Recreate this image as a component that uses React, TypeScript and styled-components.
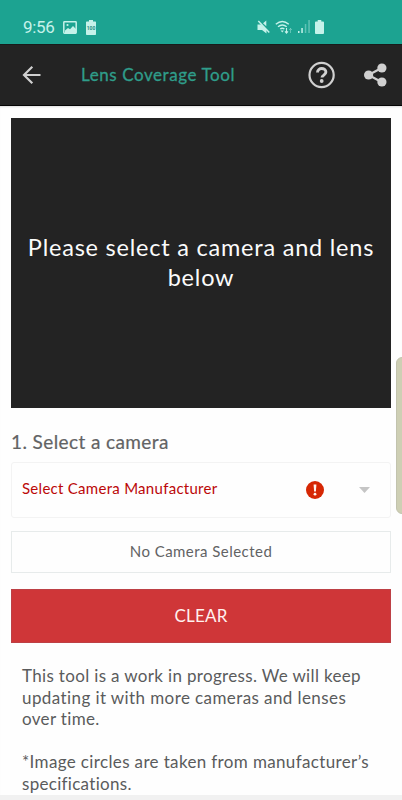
import React from "react";
import styled, { createGlobalStyle } from "styled-components";

const GlobalStyle = createGlobalStyle`
  * { box-sizing: border-box; }
  body { margin: 0; background: #fefefe; font-family: Lato, "Open Sans", sans-serif; }
  p, h1, h2 { margin: 0; font-weight: 400; }
  button { font-family: inherit; }
  svg { display: block; flex: none; }
`;

const Screen = styled.div`
  position: relative;
  width: 402px;
  height: 800px;
  overflow: hidden;
  display: flex;
  flex-direction: column;
  background: #fefefe;
`;

const StatusBar = styled.div`
  height: 44px;
  flex: none;
  display: flex;
  align-items: center;
  padding: 10px 78px 0 23px;
  background: #1ca391;
  color: #c5f2ea;
`;

const Clock = styled.span`
  width: 40px;
  font: 400 17px/20px Roboto, sans-serif;
  letter-spacing: -0.3px;
`;

const StatusGroup = styled.div<{ $end?: boolean }>`
  display: flex;
  align-items: center;
  gap: ${(p) => (p.$end ? 5 : 9)}px;
  margin-left: ${(p) => (p.$end ? "auto" : 0)};
  padding-bottom: ${(p) => (p.$end ? 1 : 0)}px;
`;

const AppBar = styled.header`
  height: 62px;
  flex: none;
  display: flex;
  align-items: center;
  padding: 0 15px 0 20px;
  background: #232323;
  border-top: 1px solid #171b1b;
  border-bottom: 1px solid #050505;
`;

const IconButton = styled.button<{ $gap?: number }>`
  display: flex;
  padding: 0;
  border: 0;
  background: none;
  color: #d0d0d0;
  margin-left: ${(p) => p.$gap ?? 0}px;
`;

const Title = styled.h1`
  flex: 1;
  margin-left: 37px;
  color: #2f9d8a;
  font-size: 17px;
  font-weight: 400;
  line-height: 22px;
  letter-spacing: 0.58px;
  white-space: nowrap;
  -webkit-text-stroke: 0.3px currentColor;
`;

const Content = styled.main`
  flex: 1;
  display: flex;
  flex-direction: column;
  padding: 12px 11px 0;
  box-shadow: inset 0 2px 2px -1px #ddd;
`;

const Preview = styled.section`
  height: 290px;
  flex: none;
  display: flex;
  align-items: center;
  justify-content: center;
  padding: 0 10px 3px;
  background: #232323;
  color: #fbfbfb;
  text-align: center;
  font-size: 23.5px;
  line-height: 30px;
  letter-spacing: 0.78px;
`;

const Heading = styled.h2`
  margin-top: 22px;
  height: 24px;
  color: #626364;
  font-size: 19px;
  line-height: 24px;
  letter-spacing: 0.4px;
  -webkit-text-stroke: 0.2px currentColor;
`;

const SelectBox = styled.div`
  height: 56px;
  flex: none;
  margin-top: 8px;
  display: flex;
  align-items: center;
  padding: 0 20px 0 10px;
  border: 1px solid #f3f3f3;
  border-radius: 3px;
  color: #bb0808;
`;

const SelectLabel = styled.span`
  width: 284px;
  padding-bottom: 4px;
  font-size: 15px;
  line-height: 20px;
  letter-spacing: 0.28px;
  white-space: nowrap;
`;

const Caret = styled.svg`
  margin-left: auto;
`;

const Selection = styled.div`
  height: 42px;
  flex: none;
  margin-top: 13px;
  border: 1px solid #e7ebeb;
  color: #626364;
  text-align: center;
  font-size: 15px;
  line-height: 39px;
  letter-spacing: 0.46px;
`;

const ClearButton = styled.button`
  height: 54px;
  flex: none;
  margin-top: 16px;
  padding: 0;
  border: 1px solid #bd4045;
  background: #cf3638;
  color: #fff1ef;
  font-size: 17px;
  line-height: 20px;
  letter-spacing: 0.2px;
`;

const Notes = styled.div`
  margin: 22px 11px 0;
  display: grid;
  gap: 21.5px;
  color: #5a5b5c;
  font-size: 17px;
  line-height: 21.6px;
  letter-spacing: 0.34px;
`;

const Line = styled.span<{ $track?: number }>`
  display: block;
  white-space: nowrap;
  letter-spacing: ${(p) => (p.$track === undefined ? "inherit" : `${p.$track}px`)};
`;

const BottomEdge = styled.div`
  height: 5px;
  flex: none;
  background: #f1f1f1;
`;

const EdgeHandle = styled.div`
  position: absolute;
  right: -6px;
  top: 357px;
  width: 12px;
  height: 157px;
  border-radius: 6px;
  background: #cecfb4;
  border: 1px solid #c2c3ae;
`;

export default function App() {
  return (
    <Screen>
      <GlobalStyle />
      <StatusBar>
        <Clock>9:56</Clock>
        <StatusGroup>
          <svg width="14" height="13" viewBox="0 0 14 13" fill="none" stroke="currentColor">
            <rect x="0.8" y="0.8" width="12.4" height="11.4" rx="0.6" strokeWidth="1.5" />
            <path d="M2 9.5 5 7l2 1.3L10 5l3 3v4H2z" fill="currentColor" stroke="none" />
            <circle cx="4.5" cy="4" r="1.1" fill="currentColor" stroke="none" />
          </svg>
          <svg width="10" height="15" viewBox="0 0 10 15">
            <path d="M3 0h4v1.5h2.3q.7 0 .7.7v12q0 .8-.8.8H.8q-.8 0-.8-.8v-12q0-.7.7-.7H3z" fill="currentColor" />
            <text x="5" y="10.2" textAnchor="middle" fontFamily="Roboto" fontSize="5" fontWeight="700" fill="#248d80">100</text>
          </svg>
        </StatusGroup>
        <StatusGroup $end>
          <svg width="13" height="14" viewBox="0 0 13 14" fill="currentColor">
            <path d="M.5 4.4H4l5.500 5.100v4L5 9.900H.5zM6 3.200 9.300.5v5.700z" />
            <path d="m1.300 1 11 11.500" stroke="currentColor" strokeWidth="1.5" />
          </svg>
          <svg width="18" height="14" viewBox="0 0 18 14" fill="none" stroke="currentColor" strokeWidth="1.4">
            <path d="M.8 4.2q6.5-5.4 13 0M3 6.7q4.3-3.5 8.7 0M5.2 9q2.1-1.6 4.2 0" />
            <path d="m5.6 10.4 1.7 2 1.5-2z" fill="currentColor" stroke="none" />
            <path d="M11.5 8v5M10 11.4l1.5 1.7 1.5-1.7" strokeWidth="1.1" />
            <path d="M15.5 13V8.5M14 10l1.5-1.6L17 10" strokeWidth="1" opacity=".4" />
          </svg>
          <svg width="12" height="13" viewBox="0 0 12 13" fill="currentColor">
            <path d="M0 11h1.5v2H0zM3.3 8h1.5v5H3.3z" />
            <path d="M6.8 4h1.5v9H6.8zM10.3 0h1.5v13h-1.5z" opacity=".4" />
          </svg>
          <svg width="9" height="14" viewBox="0 0 10 14" preserveAspectRatio="none" fill="currentColor">
            <path d="M3 0h4v1.5h2q1 0 1 1V13q0 1-1 1H1q-1 0-1-1V2.5q0-1 1-1h2z" />
          </svg>
        </StatusGroup>
      </StatusBar>
      <AppBar>
        <IconButton aria-label="Back">
          <svg width="24" height="22" viewBox="0 0 24 22" fill="none" stroke="currentColor" strokeWidth="2.2">
            <path d="M20.500 11H4M12.300 2.700 4 11l8.300 8.300" />
          </svg>
        </IconButton>
        <Title>Lens Coverage Tool</Title>
        <IconButton aria-label="Help">
          <svg width="28" height="28" viewBox="0 0 28 28" fill="none" stroke="currentColor">
            <circle cx="14.600" cy="14" r="12.1" strokeWidth="2.2" />
            <path d="M10.500 11.500c0-5.400 8.400-5 8.400-.4 0 3-3.900 2.900-3.900 5.500" strokeWidth="2.9" />
            <circle cx="14.700" cy="20" r="1.9" fill="currentColor" stroke="none" />
          </svg>
        </IconButton>
        <IconButton $gap={28} aria-label="Share">
          <svg width="24" height="24" viewBox="0 0 24 24" fill="currentColor">
            <path d="m18.500 5-13 7 13 7" fill="none" stroke="currentColor" strokeWidth="2.2" />
            <circle cx="18.900" cy="5" r="4.600" />
            <circle cx="5.600" cy="12" r="4.600" />
            <circle cx="18.900" cy="19" r="4.600" />
          </svg>
        </IconButton>
      </AppBar>
      <Content>
        <Preview>
          <p>
            <Line>Please select a camera and lens</Line>
            <Line>below</Line>
          </p>
        </Preview>
        <Heading>1. Select a camera</Heading>
        <SelectBox>
          <SelectLabel>Select Camera Manufacturer</SelectLabel>
          <svg width="18" height="18" viewBox="0 0 18 18">
            <circle cx="9" cy="9" r="9" fill="#d62704" />
            <path d="M7.600 3.500h2.800L9.900 10.500H8.100z" fill="#fff4ef" />
            <circle cx="9" cy="13.200" r="1.400" fill="#fff4ef" />
          </svg>
          <Caret width="11" height="6" viewBox="0 0 11 6">
            <path d="M0 0h11L5.500 6z" fill="#c5c5c5" />
          </Caret>
        </SelectBox>
        <Selection>No Camera Selected</Selection>
        <ClearButton>CLEAR</ClearButton>
        <Notes>
          <p>
            <Line>This tool is a work in progress. We will keep</Line>
            <Line $track={0.41}>updating it with more cameras and lenses</Line>
            <Line>over time.</Line>
          </p>
          <p>
            <Line $track={0.36}>*Image circles are taken from manufacturer’s</Line>
            <Line $track={0.3}>specifications.</Line>
          </p>
        </Notes>
      </Content>
      <BottomEdge />
      <EdgeHandle />
    </Screen>
  );
}
